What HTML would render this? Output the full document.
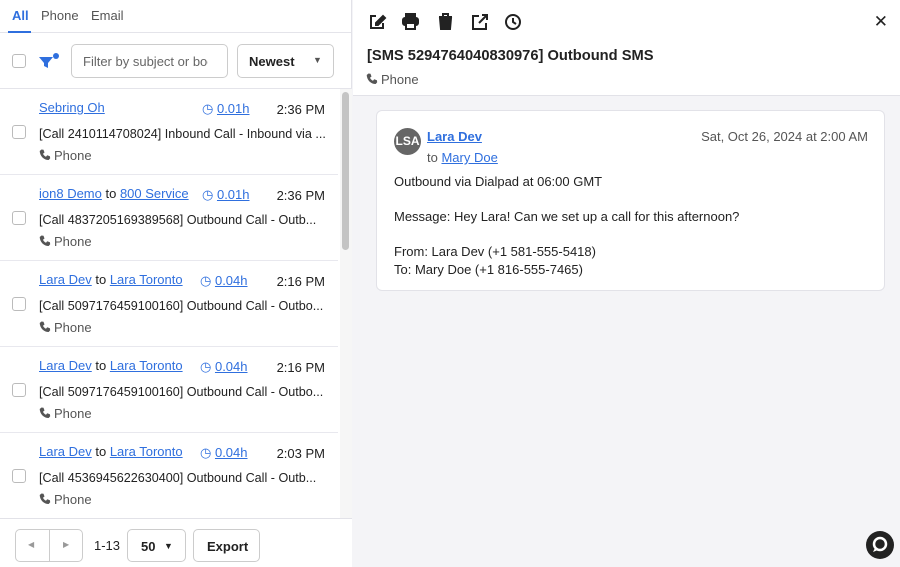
<!DOCTYPE html><html><head><style>
*{box-sizing:border-box;margin:0;padding:0}
body{width:900px;height:567px;overflow:hidden;font-family:"Liberation Sans",sans-serif;font-size:13px;color:#222;background:#f4f4f7;position:relative}
.left{position:absolute;left:0;top:0;width:352px;height:567px;background:#fff;border-right:1px solid #e2e2e8}
.tabs{height:33px;border-bottom:1px solid #e4e4ea;position:relative}
.tabs span{position:absolute;top:8px;font-size:13px;color:#555}
a{color:#2f6fde;text-decoration:underline}
.cb{position:absolute;width:14px;height:14px;border:1px solid #bbb;border-radius:3px;background:#fff}
.inp{position:absolute;border:1px solid #ccc;border-radius:5px;background:#fff}
.row{position:absolute;left:0;width:338px;height:86px;border-bottom:1px solid #e8e8ee}
.row .l{position:absolute;left:39px;top:11px}
.row .d{position:absolute;left:202px;top:12px}
.row .t{position:absolute;right:13px;top:13px}
.row .s{position:absolute;left:39px;top:38px;white-space:nowrap;font-size:12.6px}
.row .p{position:absolute;left:39px;top:59px;color:#555}
.row .cb{left:12px;top:36px}
.ph{display:inline-block;width:12px;height:12px;vertical-align:-1px;margin-right:3px}
.right{position:absolute;left:353px;top:0;width:547px;height:96px;background:#fff;border-bottom:1px solid #e2e2e8}
.card{position:absolute;left:376px;top:110px;width:509px;height:181px;background:#fff;border:1px solid #e2e2e8;border-radius:6px}
</style></head><body>
<svg width="0" height="0" style="position:absolute"><defs><symbol id="ph" viewBox="0 0 12 12"><path d="M2.5 0.5l2 0.3 1 2.7-1.5 1.2c.6 1.4 1.6 2.4 3 3l1.2-1.5 2.7 1 .3 2-1.5 1.8C4.800 11 1 7.200 0.700 2z" fill="#555"/></symbol></defs></svg>
<div class="left">
<div class="tabs"><span style="left:12px;color:#2f6fde;font-weight:bold">All</span><span style="left:41px">Phone</span><span style="left:91px">Email</span><div style="position:absolute;left:8px;top:31px;width:23px;height:2px;background:#2f6fde"></div></div>
<div class="cb" style="left:12px;top:54px"></div>
<svg style="position:absolute;left:38px;top:53px" width="22" height="16"><path d="M1 4h14l-5 6v5l-4-2v-3z" fill="#2f6fde"/><circle cx="18" cy="3" r="3" fill="#2f6fde"/></svg>
<div class="inp" style="left:71px;top:44px;width:157px;height:34px"><span style="position:absolute;left:11px;top:9px;color:#666;white-space:nowrap;overflow:hidden;width:125px">Filter by subject or body</span></div>
<div class="inp" style="left:237px;top:44px;width:97px;height:34px"><b style="position:absolute;left:11px;top:9px">Newest</b><span style="position:absolute;left:75px;top:10px;font-size:9px;color:#555">▼</span></div>
<div style="position:absolute;left:0;top:88px;width:352px;border-top:1px solid #e4e4ea"></div>
<div class="row" style="top:89px"><a class="l">Sebring Oh</a><span class="d" style="color:#2f6fde">◷ <a>0.01h</a></span><span class="t">2:36 PM</span><div class="cb"></div><span class="s">[Call 2410114708024] Inbound Call - Inbound via ...</span><span class="p"><svg class="ph"><use href="#ph"/></svg>Phone</span></div>
<div class="row" style="top:175px"><span class="l"><a>ion8 Demo</a> to <a>800 Service</a></span><span class="d" style="color:#2f6fde">◷ <a>0.01h</a></span><span class="t">2:36 PM</span><div class="cb"></div><span class="s">[Call 4837205169389568] Outbound Call - Outb...</span><span class="p"><svg class="ph"><use href="#ph"/></svg>Phone</span></div>
<div class="row" style="top:261px"><span class="l"><a>Lara Dev</a> to <a>Lara Toronto</a></span><span class="d" style="color:#2f6fde;left:200px">◷ <a>0.04h</a></span><span class="t">2:16 PM</span><div class="cb"></div><span class="s">[Call 5097176459100160] Outbound Call - Outbo...</span><span class="p"><svg class="ph"><use href="#ph"/></svg>Phone</span></div>
<div class="row" style="top:347px"><span class="l"><a>Lara Dev</a> to <a>Lara Toronto</a></span><span class="d" style="color:#2f6fde;left:200px">◷ <a>0.04h</a></span><span class="t">2:16 PM</span><div class="cb"></div><span class="s">[Call 5097176459100160] Outbound Call - Outbo...</span><span class="p"><svg class="ph"><use href="#ph"/></svg>Phone</span></div>
<div class="row" style="top:433px"><span class="l"><a>Lara Dev</a> to <a>Lara Toronto</a></span><span class="d" style="color:#2f6fde;left:200px">◷ <a>0.04h</a></span><span class="t">2:03 PM</span><div class="cb"></div><span class="s">[Call 4536945622630400] Outbound Call - Outb...</span><span class="p"><svg class="ph"><use href="#ph"/></svg>Phone</span></div>
<div style="position:absolute;left:340px;top:89px;width:12px;height:429px;background:#f6f6f6"></div>
<div style="position:absolute;left:342px;top:92px;width:7px;height:158px;background:#c4c4c4;border-radius:4px"></div>
<div style="position:absolute;left:0;top:518px;width:352px;height:49px;border-top:1px solid #e2e2e8;background:#fff"></div>
<div class="inp" style="left:15px;top:529px;width:68px;height:33px"><div style="position:absolute;left:33px;top:0;bottom:0;border-left:1px solid #ccc"></div><span style="position:absolute;left:12px;top:10px;font-size:8px;color:#999">◀</span><span style="position:absolute;left:47px;top:10px;font-size:8px;color:#999">▶</span></div>
<span style="position:absolute;left:94px;top:538px">1-13</span>
<div class="inp" style="left:127px;top:529px;width:59px;height:33px"><b style="position:absolute;left:13px;top:9px">50</b><span style="position:absolute;left:36px;top:11px;font-size:9px">▼</span></div>
<div class="inp" style="left:193px;top:529px;width:67px;height:33px"><b style="position:absolute;left:13px;top:9px">Export</b></div>
</div>
<div class="right">
<svg style="position:absolute;left:15px;top:13px" width="160" height="18" fill="none" stroke="#222" stroke-width="2">
<path d="M8 3H3v12h12v-5"/><path d="M8 10l7-7 2 2-7 7H8z" fill="#222"/>
<g transform="translate(34,0)"><rect x="4" y="1" width="9" height="4" fill="#222"/><rect x="1" y="5" width="15" height="7" rx="2" fill="#222"/><rect x="4" y="10" width="9" height="6" fill="#fff"/></g>
<g transform="translate(69,0)"><path d="M2 4h13M6 3V1h5v2" /><path d="M3 5h11l-1 11H4z" fill="#222"/></g>
<g transform="translate(103,0)"><path d="M8 3H2v13h13v-6M11 2h5v5M16 2l-8 8"/></g>
<g transform="translate(137,0)"><circle cx="8" cy="9" r="7"/><path d="M8 5v4l3 2"/></g>
</svg>
<span style="position:absolute;right:12px;top:12px;font-size:17px">✕</span>
<b style="position:absolute;left:14px;top:48px;font-size:14.7px">[SMS 5294764040830976] Outbound SMS</b>
<span style="position:absolute;left:13px;top:72px;color:#555"><svg class="ph"><use href="#ph"/></svg>Phone</span>
</div>
<div class="card">
<div style="position:absolute;left:17px;top:17px;width:27px;height:27px;border-radius:50%;background:#666;color:#fff;font-size:12px;font-weight:bold;line-height:27px;text-align:center">LSA</div>
<a style="position:absolute;left:50px;top:18px;font-weight:bold">Lara Dev</a>
<span style="position:absolute;left:50px;top:39px;color:#555">to <a>Mary Doe</a></span>
<span style="position:absolute;right:16px;top:18px;color:#555">Sat, Oct 26, 2024 at 2:00 AM</span>
<div style="position:absolute;left:17px;top:62px;line-height:17.5px">Outbound via Dialpad at 06:00 GMT<br><br>Message: Hey Lara! Can we set up a call for this afternoon?<br><br>From: Lara Dev (+1 581-555-5418)<br>To: Mary Doe (+1 816-555-7465)</div>
</div>
<svg style="position:absolute;left:866px;top:531px" width="28" height="28"><circle cx="14" cy="14" r="14" fill="#222"/><circle cx="14" cy="13" r="6" fill="none" stroke="#fff" stroke-width="2.5"/><path d="M9 17l-2 4 5-2" fill="#fff"/></svg>
</body></html>
